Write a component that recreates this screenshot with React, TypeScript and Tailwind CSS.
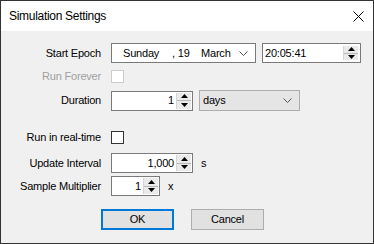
import React from "react";

function Up() {
  return (
    <svg width="7" height="4" viewBox="0 0 7 4" className="block">
      <polygon points="0,4 7,4 3.5,0" fill="#000" />
    </svg>
  );
}
function Down() {
  return (
    <svg width="7" height="4" viewBox="0 0 7 4" className="block">
      <polygon points="0,0 7,0 3.5,4" fill="#000" />
    </svg>
  );
}

function Spinner({ className = "" }: { className?: string }) {
  return (
    <div className={"w-[15px] flex flex-col border-l border-[#d4d4d4] " + className}>
      <div className="flex-1 flex items-center justify-center bg-[#eaeaea] border-b border-[#b8b8b8]">
        <Up />
      </div>
      <div className="flex-1 flex items-center justify-center bg-[#eaeaea]">
        <Down />
      </div>
    </div>
  );
}

function SpinBox({ value, w }: { value: string; w: string }) {
  return (
    <div className={"h-[20px] border border-[#7a7a7a] bg-white flex items-stretch " + w}>
      <div className="flex-1 flex items-center justify-end pr-[2px]">{value}</div>
      <Spinner className="my-[1px] mr-[1px]" />
    </div>
  );
}

function Chevron() {
  return (
    <svg width="9" height="5" viewBox="0 0 9 5" className="block">
      <polyline points="0.5,0.5 4.5,4.5 8.5,0.5" fill="none" stroke="#555" strokeWidth="1" />
    </svg>
  );
}

function Label({ children, disabled }: { children: React.ReactNode; disabled?: boolean }) {
  return (
    <div className={"w-[100px] text-right whitespace-nowrap " + (disabled ? "text-[#a0a0a0]" : "text-black")}>
      {children}
    </div>
  );
}

export default function App() {
  return (
    <div className="w-[374px] h-[244px] border border-[#333333] bg-[#f0f0f0] flex flex-col text-[11px] tracking-[-0.2px] text-black font-['Liberation_Sans',Arial,sans-serif] leading-none">
      <div className="h-[30px] bg-white flex items-center justify-between pl-[8px] pr-[9px]">
        <span className="text-[12px] tracking-[-0.3px]">Simulation Settings</span>
        <svg width="11" height="11" viewBox="0 0 11 11">
          <line x1="0.5" y1="0.5" x2="10.5" y2="10.5" stroke="#000" strokeWidth="1" />
          <line x1="10.5" y1="0.5" x2="0.5" y2="10.5" stroke="#000" strokeWidth="1" />
        </svg>
      </div>

      <div className="flex flex-col">
        {/* Start Epoch */}
        <div className="flex items-center h-[20px] mt-[12px]">
          <Label>Start Epoch</Label>
          <div className="ml-[10px] w-[145px] h-[20px] border border-[#7a7a7a] bg-white flex items-center">
            <span className="ml-[11px] w-[49px]">Sunday</span>
            <span className="w-[29px] whitespace-pre">, 19</span>
            <span>March</span>
            <span className="ml-auto mr-[7px]">
              <Chevron />
            </span>
          </div>
          <div className="ml-[6px] w-[99px] h-[20px] border border-[#7a7a7a] bg-white flex items-stretch">
            <div className="flex-1 flex items-center pl-[2px]">20:05:41</div>
            <Spinner className="my-[2px] mr-[2px]" />
          </div>
        </div>

        {/* Run Forever */}
        <div className="flex items-center h-[13px] mt-[7px]">
          <Label disabled>Run Forever</Label>
          <div className="ml-[10px] w-[13px] h-[13px] border border-[#cccccc] bg-white" />
        </div>

        {/* Duration */}
        <div className="flex items-center h-[21px] mt-[7px]">
          <Label>Duration</Label>
          <div className="ml-[10px]">
            <SpinBox value="1" w="w-[82px]" />
          </div>
          <div className="ml-[6px] w-[101px] h-[21px] border border-[#adadad] bg-[#e5e5e5] flex items-center">
            <span className="ml-[3px]">days</span>
            <span className="ml-auto mr-[7px]">
              <Chevron />
            </span>
          </div>
        </div>

        {/* Run in real-time */}
        <div className="flex items-center h-[13px] mt-[20px]">
          <Label>Run in real-time</Label>
          <div className="ml-[10px] w-[13px] h-[13px] border border-[#333333] bg-white" />
        </div>

        {/* Update Interval */}
        <div className="flex items-center h-[20px] mt-[9px]">
          <Label>Update Interval</Label>
          <div className="ml-[10px]">
            <SpinBox value="1,000" w="w-[82px]" />
          </div>
          <span className="ml-[8px]">s</span>
        </div>

        {/* Sample Multiplier */}
        <div className="flex items-center h-[20px] mt-[3px]">
          <Label>Sample Multiplier</Label>
          <div className="ml-[10px]">
            <SpinBox value="1" w="w-[49px]" />
          </div>
          <span className="ml-[8px]">x</span>
        </div>

        {/* Buttons */}
        <div className="flex items-center mt-[13px] pl-[100px]">
          <button className="w-[73px] h-[21px] border-2 border-[#0078d7] bg-[#e1e1e1] flex items-center justify-center">
            OK
          </button>
          <button className="ml-[17px] w-[73px] h-[21px] border border-[#adadad] bg-[#e1e1e1] flex items-center justify-center">
            Cancel
          </button>
        </div>
      </div>
    </div>
  );
}
